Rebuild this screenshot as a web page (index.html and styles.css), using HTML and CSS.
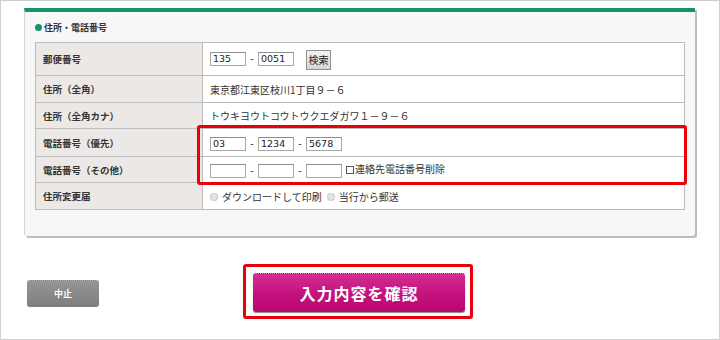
FILE: index.html
```html
<!DOCTYPE html>
<html lang="ja">
<head>
<meta charset="utf-8">
<link rel="stylesheet" href="styles.css">
</head>
<body>
<div class="frame">
  <div class="panel">
    <div class="title"><span class="dot"></span>住所・電話番号</div>
    <div class="table-wrap">
      <table class="form">
        <tr class="r1">
          <th>郵便番号</th>
          <td><span class="inp">135</span><span class="dash">-</span><span class="inp">0051</span><span class="btn-search">検索</span></td>
        </tr>
        <tr class="r2">
          <th>住所（全角）</th>
          <td>東京都江東区枝川1丁目９－６</td>
        </tr>
        <tr class="r3">
          <th>住所（全角カナ）</th>
          <td>トウキヨウトコウトウクエダガワ１－９－６</td>
        </tr>
        <tr class="r4">
          <th>電話番号（優先）</th>
          <td><span class="inp">03</span><span class="dash">-</span><span class="inp">1234</span><span class="dash">-</span><span class="inp">5678</span></td>
        </tr>
        <tr class="r5">
          <th>電話番号（その他）</th>
          <td><span class="inp"></span><span class="dash">-</span><span class="inp"></span><span class="dash">-</span><span class="inp"></span><span class="chk"></span>連絡先電話番号削除</td>
        </tr>
        <tr class="r6">
          <th>住所変更届</th>
          <td class="radios"><span class="radio"></span>ダウンロードして印刷<span class="radio r-2"></span>当行から郵送</td>
        </tr>
      </table>
      <div class="mark mark-table"></div>
    </div>
  </div>
  <div class="actions">
    <span class="btn-cancel">中止</span>
    <div class="confirm-wrap">
      <span class="btn-confirm">入力内容を確認</span>
      <div class="mark mark-btn"></div>
    </div>
  </div>
</div>
</body>
</html>
```

FILE: styles.css
```css
* { box-sizing: border-box; }
html, body { margin: 0; padding: 0; background: #fff; }
body {
  width: 720px; height: 340px; overflow: hidden;
  font-family: "Noto Sans CJK JP", "Noto Sans", sans-serif;
  color: #333;
}
.frame {
  width: 720px; height: 340px;
  border: 1px solid #cfcfcf;
  padding: 7px 0 0 23px;
}
.panel {
  width: 671px; height: 228px;
  background: #f7f7f7;
  border-top: 4px solid #16926f;
  border-left: 1px solid #d4d4d4;
  box-shadow: 2px 2px 0 #bdbdbd;
  border-radius: 0 0 3px 3px;
  padding: 0 0 0 10px;
}
.title {
  display: flex; align-items: center;
  height: 30px;
  font-size: 9px; font-weight: bold; color: #333;
  padding-top: 1px;
}
.dot {
  width: 7px; height: 7px; border-radius: 50%;
  background: #16926f; margin-right: 2px;
}
.table-wrap { position: relative; width: 650px; }
.form {
  border-collapse: collapse;
  width: 650px;
  background: #fff;
}
.form th, .form td {
  border: 1px solid #bcbcbc;
  padding: 0 0 0 7px;
  text-align: left;
  vertical-align: middle;
}
.form th {
  width: 167px;
  background: #ece8e5;
  font-size: 9.5px; font-weight: bold; color: #333;
}
.form td { font-size: 10px; color: #333; padding-left: 7px; }
.r1 { height: 33px; }
.r2 { height: 27px; }
.r3 { height: 26px; }
.r4 { height: 28px; }
.r5 { height: 26px; }
.r6 { height: 27px; }
.inp {
  display: inline-block; vertical-align: middle;
  width: 36px; height: 14px;
  border: 1px solid #a8a8a8;
  border-top-color: #8c8c8c;
  background: #fff;
  font-family: "DejaVu Sans", sans-serif;
  font-size: 9.5px; line-height: 12px;
  padding-left: 2px; color: #222;
}
.dash {
  display: inline-block; vertical-align: middle;
  width: 12px; height: 14px; text-align: center;
  font-family: "DejaVu Sans", sans-serif;
  font-size: 10px; line-height: 13px; color: #444;
}
.btn-search {
  display: inline-block; vertical-align: middle;
  margin-left: 12px; margin-top: 2px;
  width: 25px; height: 20px;
  border: 1px solid #8f8f8f;
  background: linear-gradient(#f2f2f2, #d6d6d6);
  font-size: 10px; line-height: 18px; text-align: center; color: #222;
}
.chk {
  display: inline-block; vertical-align: middle;
  width: 8px; height: 8px;
  border: 1px solid #555;
  margin: -1px 1px 0 4px;
}
.radios { color: #444; }
.radio {
  display: inline-block; vertical-align: middle;
  width: 8px; height: 8px; border-radius: 50%;
  background: radial-gradient(circle, #e4e4e4 40%, #c7c7c7 70%);
  margin: -2px 4px 0 0;
}
.r-2 { margin-left: 5px; }
.mark {
  position: absolute;
  border: 3px solid #e8000b;
  border-radius: 3px;
  pointer-events: none;
}
.mark-table { left: 162px; top: 83px; width: 490px; height: 60px; }
.actions {
  display: flex; align-items: center;
  height: 104px;
  padding-left: 3px;
  position: relative;
}
.btn-cancel {
  display: flex; align-items: center; justify-content: center;
  width: 72px; height: 27px;
  border-radius: 3px;
  background: linear-gradient(#959595, #7e7e7e);
  border-top: 1px dotted #b5b5b5;
  color: #fff; font-size: 9px; font-weight: bold;
  margin-top: 10px;
}
.confirm-wrap {
  position: relative;
  margin-left: 154px;
  margin-top: 9px;
}
.btn-confirm {
  display: flex; align-items: center; justify-content: center;
  width: 212px; height: 39px;
  border-radius: 3px;
  background: linear-gradient(#d42c96 0%, #c5137f 50%, #b7076f 100%);
  border-top: 1px dotted #e57abc;
  box-shadow: 0 1px 1px #888;
  color: #fff; font-size: 16px; font-weight: bold; letter-spacing: 1px;
}
.mark-btn { left: -10px; top: -9px; width: 230px; height: 55px; }
```
